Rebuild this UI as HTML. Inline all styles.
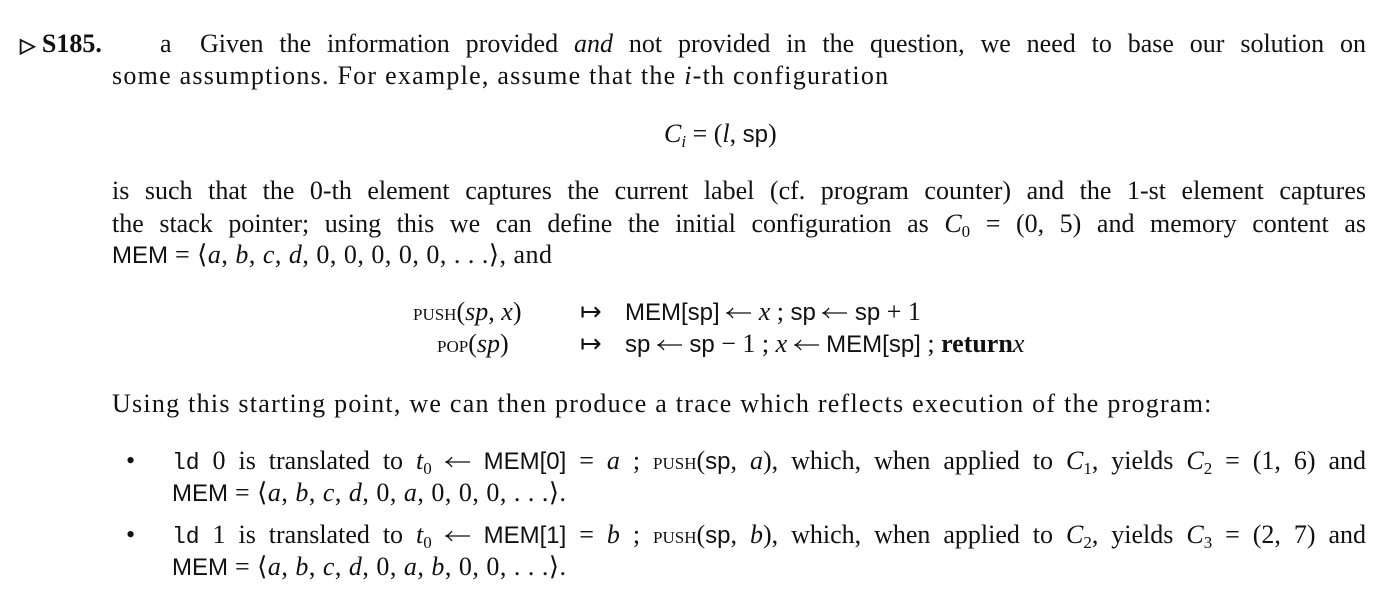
<!DOCTYPE html><html><head><meta charset="utf-8"><style>
body{margin:0;width:1394px;height:603px;background:#fff;position:relative;overflow:hidden;font-family:"Liberation Serif",serif;font-size:26px;color:#111}
.l{position:absolute;white-space:nowrap;line-height:30px}
.t{letter-spacing:1.25px}
.u{letter-spacing:0.5px}
.j{text-align:justify;text-align-last:justify;white-space:normal}
.s{font-family:"Liberation Sans",sans-serif;font-size:24px;letter-spacing:0}
.m{font-family:"Liberation Mono",monospace;font-size:23px;letter-spacing:0}
.sc{font-variant:small-caps;font-size:24px}
i{font-style:italic}
sub{font-size:17px;vertical-align:-5px;line-height:0}
.ar{display:inline-block;width:26px;height:12px;vertical-align:1px}
</style></head><body>
<div class="l" style="left:20px;top:29px"><b><span style="font-size:20px">▷</span> S185.</b></div>
<div class="l" style="left:160px;top:29px">a</div>
<div class="l j" style="left:200px;top:29px;width:1166px">Given the information provided <i>and</i> not provided in the question, we need to base our solution on</div>
<div class="l t" style="left:112px;top:61px">some assumptions. For example, assume that the <i>i</i>-th configuration</div>
<div class="l" style="left:664px;top:119px"><i>C<sub>i</sub></i> = (<i>l</i>, <span class="s">sp</span>)</div>
<div class="l j" style="left:112px;top:176px;width:1254px">is such that the 0-th element captures the current label (cf. program counter) and the 1-st element captures</div>
<div class="l j" style="left:112px;top:209px;width:1254px">the stack pointer; using this we can define the initial configuration as <i>C</i><sub>0</sub> = (0, 5) and memory content as</div>
<div class="l u" style="left:112px;top:240px"><span class="s">MEM</span> = ⟨<i>a</i>, <i>b</i>, <i>c</i>, <i>d</i>, 0, 0, 0, 0, 0, . . .⟩, and</div>
<div class="l" style="left:413px;top:297px"><span class="sc">push</span>(<i>sp</i>, <i>x</i>)</div>
<div class="l" style="left:580px;top:297px">↦</div>
<div class="l" style="left:625px;top:297px"><span class="s">MEM[sp]</span> <svg class="ar" viewBox="0 0 26 12"><path d="M1 6H25M7 1Q4 5 1 6Q4 7 7 11" fill="none" stroke="#111" stroke-width="1.3"/></svg> <i>x</i> ; <span class="s">sp</span> <svg class="ar" viewBox="0 0 26 12"><path d="M1 6H25M7 1Q4 5 1 6Q4 7 7 11" fill="none" stroke="#111" stroke-width="1.3"/></svg> <span class="s">sp</span> + 1</div>
<div class="l" style="left:437px;top:329px"><span class="sc">pop</span>(<i>sp</i>)</div>
<div class="l" style="left:580px;top:329px">↦</div>
<div class="l" style="left:625px;top:329px"><span class="s">sp</span> <svg class="ar" viewBox="0 0 26 12"><path d="M1 6H25M7 1Q4 5 1 6Q4 7 7 11" fill="none" stroke="#111" stroke-width="1.3"/></svg> <span class="s">sp</span> − 1 ; <i>x</i> <svg class="ar" viewBox="0 0 26 12"><path d="M1 6H25M7 1Q4 5 1 6Q4 7 7 11" fill="none" stroke="#111" stroke-width="1.3"/></svg> <span class="s">MEM[sp]</span> ; <b>return</b><i>x</i></div>
<div class="l t" style="left:112px;top:389px">Using this starting point, we can then produce a trace which reflects execution of the program:</div>
<div class="l" style="left:126px;top:446px">•</div>
<div class="l j" style="left:172px;top:446px;width:1194px"><span class="m">ld</span> 0 is translated to <i>t</i><sub>0</sub> <svg class="ar" viewBox="0 0 26 12"><path d="M1 6H25M7 1Q4 5 1 6Q4 7 7 11" fill="none" stroke="#111" stroke-width="1.3"/></svg> <span class="s">MEM[0]</span> = <i>a</i> ; <span class="sc">push</span>(<span class="s">sp</span>, <i>a</i>), which, when applied to <i>C</i><sub>1</sub>, yields <i>C</i><sub>2</sub> = (1, 6) and</div>
<div class="l u" style="left:172px;top:478px"><span class="s">MEM</span> = ⟨<i>a</i>, <i>b</i>, <i>c</i>, <i>d</i>, 0, <i>a</i>, 0, 0, 0, . . .⟩.</div>
<div class="l" style="left:126px;top:520px">•</div>
<div class="l j" style="left:172px;top:520px;width:1194px"><span class="m">ld</span> 1 is translated to <i>t</i><sub>0</sub> <svg class="ar" viewBox="0 0 26 12"><path d="M1 6H25M7 1Q4 5 1 6Q4 7 7 11" fill="none" stroke="#111" stroke-width="1.3"/></svg> <span class="s">MEM[1]</span> = <i>b</i> ; <span class="sc">push</span>(<span class="s">sp</span>, <i>b</i>), which, when applied to <i>C</i><sub>2</sub>, yields <i>C</i><sub>3</sub> = (2, 7) and</div>
<div class="l u" style="left:172px;top:552px"><span class="s">MEM</span> = ⟨<i>a</i>, <i>b</i>, <i>c</i>, <i>d</i>, 0, <i>a</i>, <i>b</i>, 0, 0, . . .⟩.</div>
</body></html>
